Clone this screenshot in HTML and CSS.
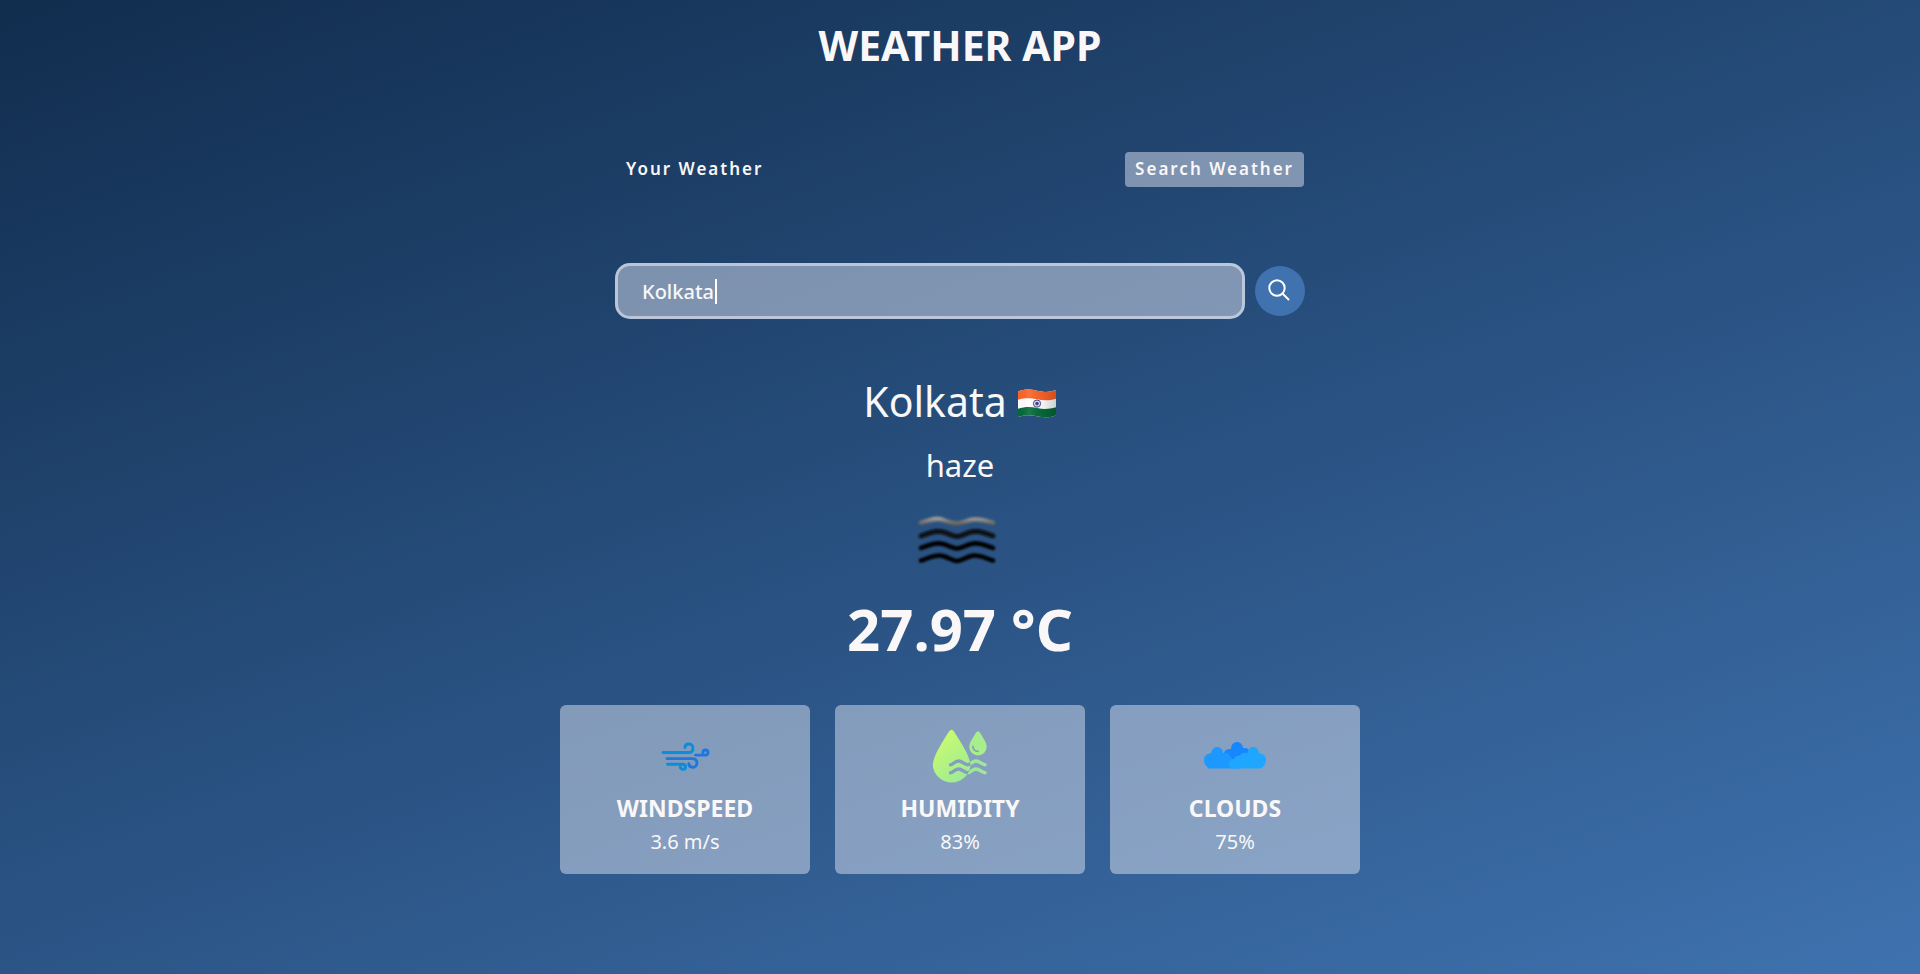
FILE: index.html
```html
<!DOCTYPE html>
<html lang="en">
<head>
<meta charset="utf-8">
<meta name="viewport" content="width=device-width, initial-scale=1">
<title>Weather App</title>
<link rel="stylesheet" href="styles.css">
</head>
<body>
<main class="wrapper">
  <h1 class="title">WEATHER APP</h1>

  <nav class="tabs" aria-label="Weather views">
    <button class="tab" type="button">Your Weather</button>
    <button class="tab tab-current" type="button">Search Weather</button>
  </nav>

  <form class="search">
    <div class="field">
      <input class="search-input" type="text" value="Kolkata" aria-label="City">
      <span class="caret"></span>
    </div>
    <button class="search-btn" type="submit" aria-label="Search">
      <svg width="24" height="24" viewBox="0 0 24 24" fill="none" stroke="#fff" stroke-width="2" stroke-linecap="round">
        <circle cx="9" cy="9" r="7.700"/>
        <path d="M14.500 14.500 20.500 20.500"/>
      </svg>
    </button>
  </form>

  <section class="weather">
    <div class="place">
      <p class="city">Kolkata</p>
      <svg class="flag" width="40" height="30" viewBox="0 0 40 30" role="img" aria-label="India">
        <defs>
          <clipPath id="wave"><path d="M1 2.500C8-.2 14 .3 20 1.800S32 3.500 39 1V26.500C32 29 26 28.500 20 27.300S8 25.500 1 28Z"/></clipPath>
          <linearGradient id="fold">
            <stop offset="0" stop-color="#000" stop-opacity="0"/>
            <stop offset=".3" stop-color="#fff" stop-opacity=".1"/>
            <stop offset=".65" stop-color="#000" stop-opacity=".05"/>
            <stop offset="1" stop-color="#000" stop-opacity=".2"/>
          </linearGradient>
        </defs>
        <g clip-path="url(#wave)">
          <path fill="#fff" d="M0 0H40V30H0Z"/>
          <path fill="#fb6327" d="M0 0H40V9.500C32 12 26 11.500 20 10.300S8 8.500 0 11Z"/>
          <path fill="#046a38" d="M0 20C8 17.300 14 17.600 20 19S32 20.500 40 18V30H0Z"/>
          <path fill="url(#fold)" d="M0 0H40V30H0Z"/>
        </g>
        <circle cx="20" cy="14.600" r="3.600" fill="#dcdcec" stroke="#45458c" stroke-width="1"/>
        <circle cx="20" cy="14.600" r="1.800" fill="#45458c"/>
      </svg>
    </div>
    <p class="desc">haze</p>
    <svg class="haze" width="90" height="80" viewBox="3 0 90 80" fill="none" stroke-width="4.600" stroke-linecap="round" stroke-linejoin="round" role="img" aria-label="Haze">
      <defs>
        <linearGradient id="mist" gradientUnits="userSpaceOnUse" x1="0" y1="15" x2="0" y2="23">
          <stop offset="0" stop-color="#b4b4b4"/><stop offset="1" stop-color="#625e5a"/>
        </linearGradient>
        <filter id="soft" filterUnits="userSpaceOnUse" x="0" y="0" width="94" height="80"><feGaussianBlur stdDeviation=".8"/></filter>
      </defs>
      <g filter="url(#soft)">
        <path stroke="url(#mist)" d="M9 22C17 20 24 16 31 19S41 22.500 45 22.500 52 21 59 19 73 20 81 22"/>
        <path stroke="#080808" d="M9 35C17 32 24 29 31 31S41 35.500 45 35.500 52 33 59 31 73 32 81 35"/>
        <path stroke="#000" d="M9 47C17 44 24 41 31 43S41 47.500 45 47.500 52 45 59 43 73 44 81 47"/>
        <path stroke="#000" d="M9 59.500C17 57 24 53 31 55S41 60 45 60 52 57 59 55 73 57 81 59.500"/>
      </g>
    </svg>
    <p class="temp">27.97 °C</p>

    <div class="cards">
      <article class="card">
        <svg width="50" height="50" viewBox="0 0 50 50" fill="none" stroke-width="2.900" stroke-linecap="round" aria-hidden="true">
          <g stroke="#0a8ddb">
            <path d="M3 20.500H28.500C31.800 20.500 33 18.500 33 16.200 33 13.500 31 12 28.800 12 26.500 12 25 13.500 25 15.500"/>
            <path d="M7.500 32.200H22.500C24.800 32.200 25.600 33.500 25.600 34.700 25.600 36.200 24.500 37.200 23 37.200 21.300 37.200 20 36 20.300 34.600"/>
          </g>
          <g stroke="#1e77dc">
            <path d="M7 26.600H32C35.300 26.600 37 28.500 37 31 37 33.700 34.800 35.300 32.700 35.300 30.500 35.300 29 34 28.800 31.700"/>
            <path d="M35.500 23.100H45C47 23.100 48 21.900 48 20.400 48 18.900 46.800 18 45.400 18 43.700 18 42.800 19.200 43 20.700"/>
          </g>
        </svg>
        <h2 class="card-title">WINDSPEED</h2>
        <p class="card-value">3.6 m/s</p>
      </article>
      <article class="card">
        <svg width="56" height="56" viewBox="0 0 56 56" aria-hidden="true">
          <defs>
            <linearGradient id="lime" gradientUnits="userSpaceOnUse" x1="4" y1="12" x2="40" y2="52">
              <stop offset="0" stop-color="#c8fb70"/><stop offset="1" stop-color="#98e89c"/>
            </linearGradient>
            <path id="drop" d="M19.500 .8C20.500 .8 21.500 1.700 22.500 3.200 28.500 13 38.500 27 38.500 37A19 18.800 0 0 1 .8 37C.8 27 10.500 13 16.500 3.200 17.500 1.700 18.500 .8 19.500 .8Z"/>
            <g id="waves" fill="none" stroke-width="3.400" stroke-linecap="round">
              <path d="M18.500 35.800C21 35.800 22.500 32 26.500 32S32 35.800 35.500 35.800 40 32 44 32 49.500 35.800 53 35.800"/>
              <path d="M18.500 43.800C21 43.800 22.500 40 26.500 40S32 43.800 35.500 43.800 40 40 44 40 49.500 43.800 53 43.800"/>
            </g>
            <mask id="inside" maskUnits="userSpaceOnUse" x="0" y="0" width="56" height="56">
              <path fill="#fff" d="M0 0H56V56H0Z"/>
              <use href="#waves" stroke="#000"/>
            </mask>
            <mask id="outside" maskUnits="userSpaceOnUse" x="0" y="0" width="56" height="56">
              <path fill="#fff" d="M0 0H56V56H0Z"/>
              <use href="#drop" fill="#000"/>
            </mask>
          </defs>
          <use href="#drop" fill="url(#lime)" mask="url(#inside)"/>
          <g mask="url(#outside)"><use href="#waves" stroke="#9ee897"/></g>
          <path fill="#a9ee8d" d="M46 2.500C47 2.500 47.500 3 48.200 4 51.500 9.500 54.700 13.500 54.700 18A8.700 8.400 0 0 1 37.300 18C37.300 13.500 40.500 9.500 43.800 4 44.500 3 45 2.500 46 2.500Z"/>
          <path fill="none" stroke="#839fb8" stroke-width="1.800" stroke-linecap="round" d="M41 17.500C41 20 43 22.300 46 22.300"/>
        </svg>
        <h2 class="card-title">HUMIDITY</h2>
        <p class="card-value">83%</p>
      </article>
      <article class="card">
        <svg width="62" height="50" viewBox="0 0 62 50" aria-hidden="true">
          <path fill="#1787ff" d="M20 32V22C20 18.500 23 16.800 27 17 27 12.500 30 10 33 10S39 12.500 39 16C43 15.500 46 17 47 22V32Z"/>
          <path fill="#1c98ff" d="M5 36.500C1.500 34 0 31 0 28 0 24 3 21.300 7 21.600 7.500 17.500 10 15 13 15 16.500 15 19 17.500 19 21 21.500 20 25 21 26 24L36 36.500Z"/>
          <path fill="#1fa7ff" d="M27 36.500C25.500 35 25 33.500 25 32 25 29 27.500 27 30 27 31 24 34 23 36 23.500 37 21 41 20 43.500 21.500 43.500 17.500 46 15 49 15S55 17.500 55 21.600C59 21.300 62 24 62 28 62 31 60.500 34 57 36.500Z"/>
        </svg>
        <h2 class="card-title">CLOUDS</h2>
        <p class="card-value">75%</p>
      </article>
    </div>
  </section>
</main>
</body>
</html>
```
FILE: styles.css
```css
* {
  box-sizing: border-box;
  margin: 0;
  padding: 0;
}

body {
  min-height: 100vh;
  color: #f9f7f7;
  font-family: "Noto Sans", "Open Sans", sans-serif;
  background: linear-gradient(160deg, #112d4e 0%, #3f72af 100%) no-repeat;
}

button,
input {
  border: none;
  color: inherit;
  font: inherit;
}

.wrapper {
  display: flex;
  flex-direction: column;
  align-items: center;
  padding: 19px 16px;
}

.title {
  font-size: 41px;
  line-height: 52px;
}

.tabs {
  display: flex;
  justify-content: space-between;
  width: 100%;
  max-width: 688px;
  margin-top: 81px;
}

.tab {
  padding: 4px 10px 6px;
  border-radius: 4px;
  background: transparent;
  font-size: 17px;
  font-weight: 600;
  line-height: 25px;
  letter-spacing: 2px;
  cursor: pointer;
}

.tab-current {
  background: rgba(219, 226, 239, 0.5);
}

.search {
  display: flex;
  align-items: center;
  gap: 10px;
  width: 100%;
  max-width: 690px;
  margin-top: 76px;
}

.field {
  position: relative;
  flex: 1;
}

.search-input {
  display: block;
  width: 100%;
  height: 56px;
  padding: 0 24px;
  border: 3px solid rgba(219, 226, 239, 0.65);
  border-radius: 15px;
  outline: none;
  background: rgba(219, 226, 239, 0.5);
  caret-color: transparent;
  font-size: 20px;
  font-weight: 500;
}

.caret {
  position: absolute;
  top: 16px;
  left: 100px;
  width: 2px;
  height: 25px;
  background: #fff;
}

.search-btn {
  display: grid;
  place-items: center;
  width: 50px;
  height: 50px;
  border-radius: 50%;
  background: #3f72af;
  cursor: pointer;
}

.weather {
  display: flex;
  flex-direction: column;
  align-items: center;
  width: 100%;
  margin-top: 56px;
}

.place {
  display: flex;
  align-items: center;
  gap: 10px;
}

.city {
  font-size: 41px;
  line-height: 53px;
}

.flag {
  margin-top: 4px;
}

.desc {
  margin-top: 17px;
  font-size: 31px;
  line-height: 40px;
}

.haze {
  margin-top: 16px;
}

.temp {
  margin-top: 12px;
  font-size: 58px;
  font-weight: 700;
  line-height: 72px;
}

.cards {
  display: grid;
  grid-template-columns: repeat(3, 1fr);
  gap: 25px;
  width: 100%;
  max-width: 800px;
  margin-top: 40px;
}

.card {
  display: grid;
  grid-template-rows: 70px 30px 30px;
  gap: 3px;
  place-items: center;
  padding: 17px 16px 16px;
  border-radius: 6px;
  background: rgba(219, 226, 239, 0.5);
}

.card-title {
  font-size: 23px;
  font-weight: 700;
  line-height: 26px;
  align-self: start;
}

.card-value {
  font-size: 20px;
  line-height: 28px;
  align-self: start;
}
```
